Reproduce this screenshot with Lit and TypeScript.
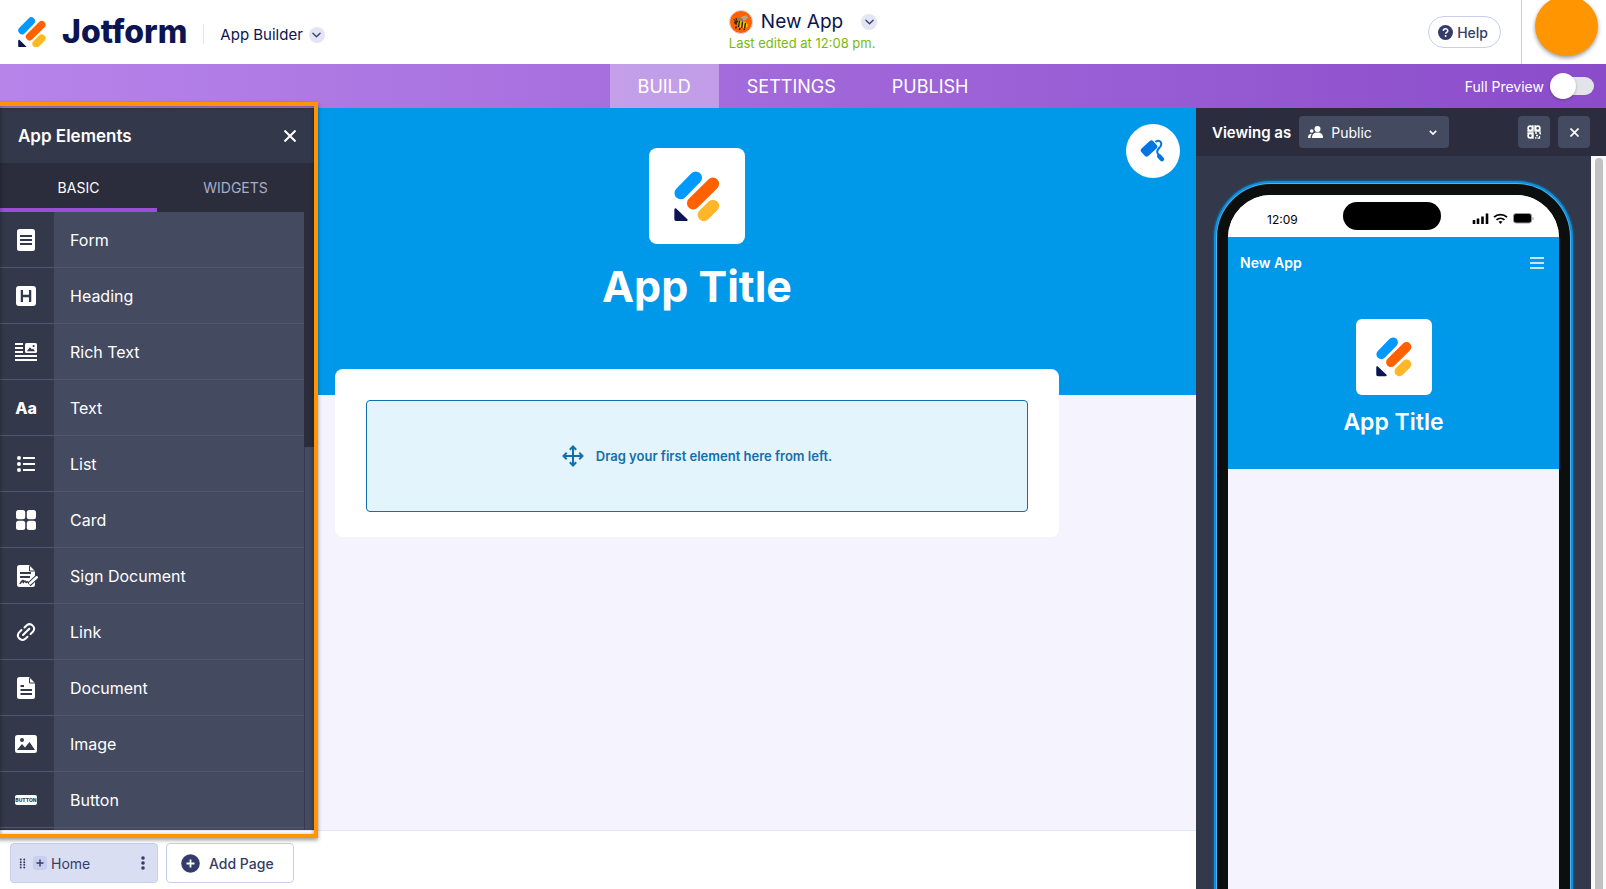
import { LitElement, html, svg, css, nothing, TemplateResult } from "lit";
import { customElement, property, state } from "lit/decorators.js";
import { classMap } from "lit/directives/class-map.js";

const chevron = svg`<path d="M1 1l4 4 4-4" fill="none" stroke="currentColor" stroke-width="1.4" stroke-linecap="round" stroke-linejoin="round"/>`;

/** Pencil mark of the brand, scaled by its host's width. */
@customElement("brand-mark")
export class BrandMark extends LitElement {
  static styles = css`
    :host { display: block; flex: none; }
    svg { display: block; width: 100%; height: auto; }
  `;

  render() {
    return html`
      <svg viewBox="284 212 137 150" aria-hidden="true" fill="none" stroke-linecap="round">
        <path d="M304 278L349 232" stroke="#0099ff" stroke-width="37" />
        <path d="M341 308L400 250" stroke="#ff6100" stroke-width="37" />
        <path d="M373 343L400 316" stroke="#ffb629" stroke-width="37" />
        <path d="M285 328c0-5 4-6 7-3l31 30c3 3 2 6-2 6h-29c-5 0-7-2-7-7z" fill="#0a1551" />
      </svg>
    `;
  }
}

interface PaletteItem {
  label: string;
  icon: TemplateResult;
}

const DARK = "#33384a";

const ITEMS: PaletteItem[] = [
  {
    label: "Form",
    icon: svg`<rect x="2" y="0" width="18" height="22" rx="2.5"/><path d="M5 7h12M5 11h12M5 15h12" stroke="${DARK}" stroke-width="2"/>`,
  },
  {
    label: "Heading",
    icon: svg`<rect x="1" y="1" width="20" height="20" rx="3"/><path d="M6.900 5v12M15.100 5v12M7 11h8" stroke="${DARK}" stroke-width="2.300"/>`,
  },
  {
    label: "Rich Text",
    icon: svg`<path d="M0 3h8M0 7h8M0 11h8M0 15h22M0 19h22" stroke="#fff" stroke-width="2"/><rect x="10" y="2" width="12" height="10" rx="1.500"/><path d="M11.800 10.200l3.200-4 2 2.400 1-1 2 2.600z" fill="${DARK}"/><circle cx="18.600" cy="5" r="1.100" fill="${DARK}"/>`,
  },
  {
    label: "Text",
    icon: svg`<text x="11" y="17" text-anchor="middle" font-size="16" font-weight="800" font-family="Inter, sans-serif">Aa</text>`,
  },
  {
    label: "List",
    icon: svg`<circle cx="4" cy="5" r="2"/><circle cx="4" cy="11" r="2"/><circle cx="4" cy="17" r="2"/><path d="M8 5h12M8 11h12M8 17h12" stroke="#fff" stroke-width="2"/>`,
  },
  {
    label: "Card",
    icon: svg`<rect x="1" y="1" width="9.200" height="9.200" rx="2.500"/><rect x="11.800" y="1" width="9.200" height="9.200" rx="2.500"/><rect x="1" y="11.800" width="9.200" height="9.200" rx="2.500"/><rect x="11.800" y="11.800" width="9.200" height="9.200" rx="2.500"/>`,
  },
  {
    label: "Sign Document",
    icon: svg`<path d="M4.500 0H14l6 6v13.500a2.500 2.500 0 0 1-2.500 2.500h-13A2.500 2.500 0 0 1 2 19.500v-17A2.500 2.500 0 0 1 4.500 0z"/><path d="M14.500 1v5H20" fill="none" stroke="${DARK}" stroke-width="1"/><path d="M5 8h11M5 12h10" stroke="${DARK}" stroke-width="1.800"/><path d="M5 19c2-4 4-5 3-1 2-3 3-2 3 0 1-2 2-1 3 0h4" fill="none" stroke="${DARK}" stroke-width="1.500"/><path d="M22.500 11.500L14 19.500" stroke="${DARK}" stroke-width="4.500"/><path d="M21.800 12.300L15.200 18.300" stroke="#fff" stroke-width="2.600" stroke-linecap="round"/>`,
  },
  {
    label: "Link",
    icon: svg`<g fill="none" stroke="#fff" stroke-width="2" stroke-linecap="round"><path d="M8 14l6.300-6.300"/><path d="M9.500 6.500l2.300-2.300a4.500 4.500 0 0 1 6.300 6.300l-2.600 2.600"/><path d="M12.500 15.700l-2.300 2.200a4.500 4.500 0 0 1-6.300-6.300l2.600-2.600"/></g>`,
  },
  {
    label: "Document",
    icon: svg`<path d="M4.500 0H14l6 6v13.500a2.500 2.500 0 0 1-2.500 2.500h-13A2.500 2.500 0 0 1 2 19.500v-17A2.500 2.500 0 0 1 4.500 0z"/><path d="M14.500 1v5H20" fill="none" stroke="${DARK}" stroke-width="1"/><path d="M5.500 9h3.500M5.500 13h11.500M5.500 17h11.500" stroke="${DARK}" stroke-width="1.800"/>`,
  },
  {
    label: "Image",
    icon: svg`<rect x="0" y="2" width="22" height="18" rx="2.500"/><circle cx="7" cy="7" r="2" fill="${DARK}"/><path d="M2 17l5-6 3 3.500 4.500-5.500 5.500 8z" fill="${DARK}"/>`,
  },
  {
    label: "Button",
    icon: svg`<rect x="0" y="6" width="22" height="10" rx="2"/><text x="11" y="13" text-anchor="middle" font-size="5" font-weight="800" font-family="Inter, sans-serif" fill="${DARK}">BUTTON</text>`,
  },
  { label: "", icon: svg`` },
];

/** Left palette with the elements that can be dragged on the canvas. */
@customElement("element-palette")
export class ElementPalette extends LitElement {
  @state() private tab = "BASIC";

  static styles = css`
    :host {
      display: grid;
      grid-template-rows: 55px 49px minmax(0, 1fr);
      position: relative;
      background: #2b2d3c;
      color: #fff;
      min-height: 0;
    }
    button { font: inherit; color: inherit; background: none; border: 0; padding: 0; cursor: pointer; }
    .head {
      display: flex;
      align-items: center;
      justify-content: space-between;
      padding: 0 18px;
      background: #33384a;
    }
    h2 { margin: 0; font-size: 17px; line-height: 24px; font-weight: 600; }
    .close { display: grid; place-items: center; }
    .close svg { display: block; }
    .tabs { display: grid; grid-template-columns: 1fr 1fr; }
    .tab {
      font-size: 14px;
      line-height: 20px;
      color: #a9aec6;
      border-bottom: 4px solid transparent;
      padding-top: 4px;
    }
    .on { color: #fff; border-bottom-color: #9a4fd6; }
    .body { display: grid; grid-template-columns: 1fr 10px; min-height: 0; }
    ul { list-style: none; margin: 0; padding: 0; overflow: hidden; }
    .item {
      display: grid;
      grid-template-columns: 54px 1fr;
      width: 100%;
      height: 56px;
      box-sizing: border-box;
      border-bottom: 1px solid #4f566d;
      background: #444a5f;
      font-size: 16px;
      text-align: left;
      cursor: grab;
    }
    .icon { display: grid; place-items: center; background: #33384a; padding-right: 2px; }
    .icon svg { display: block; overflow: visible; }
    .label { align-self: center; padding-left: 16px; }
    .track { display: flex; flex-direction: column; justify-content: flex-end; }
    .thumb { height: 62%; background: #444a5f; border-left: 1px solid #363b4e; }
    .frame {
      position: absolute;
      inset: -6px -4px -8px -4px;
      border: 4px solid #ff9500;
      box-shadow: 0 2px 4px rgba(0, 0, 0, 0.4), inset 0 1px 4px rgba(0, 0, 0, 0.4);
      pointer-events: none;
      z-index: 2;
    }
  `;

  render() {
    return html`
      <div class="head">
        <h2>App Elements</h2>
        <button class="close" aria-label="Close">
          <svg width="12" height="12" viewBox="0 0 12 12" stroke="#fff" stroke-width="2">
            <path d="M.5.500l11 11M11.500.500l-11 11" />
          </svg>
        </button>
      </div>
      <div class="tabs" role="tablist">
        ${["BASIC", "WIDGETS"].map(
          (t) => html`<button
            role="tab"
            aria-selected=${t === this.tab}
            class=${classMap({ tab: true, on: t === this.tab })}
            @click=${() => (this.tab = t)}
          >${t}</button>`
        )}
      </div>
      <div class="body">
        <ul>
          ${ITEMS.map(
            (i) => html`<li>
              <button class="item">
                <span class="icon"><svg width="22" height="22" viewBox="0 0 22 22" fill="#fff" aria-hidden="true">${i.icon}</svg></span>
                <span class="label">${i.label || nothing}</span>
              </button>
            </li>`
          )}
        </ul>
        <div class="track"><div class="thumb"></div></div>
      </div>
      <div class="frame"></div>
    `;
  }
}

/** Right column with the live phone preview. */
@customElement("phone-preview")
export class PhonePreview extends LitElement {
  @property() name = "New App";
  @property() heading = "App Title";

  static styles = css`
    :host {
      display: grid;
      grid-template-rows: 48px minmax(0, 1fr);
      background: #33384a;
      color: #fff;
      min-height: 0;
    }
    .bar {
      display: flex;
      align-items: center;
      gap: 8px;
      padding: 0 16px;
      background: #2b2d3f;
      font-size: 15px;
      font-weight: 600;
    }
    .picker {
      display: grid;
      grid-template-columns: 32px 1fr 20px;
      align-items: center;
      width: 150px;
      height: 32px;
      border-radius: 4px;
      background: #444a5f;
      margin-right: auto;
    }
    .picker > svg { grid-row: 1; pointer-events: none; z-index: 1; }
    .people { grid-column: 1; margin-left: 9px; }
    .arrow { grid-column: 3; }
    select {
      grid-column: 1 / 4;
      grid-row: 1;
      height: 32px;
      appearance: none;
      border: 0;
      background: none;
      color: #fff;
      font: inherit;
      font-size: 14px;
      font-weight: 400;
      padding: 0 24px 0 32px;
    }
    .square {
      display: grid;
      place-items: center;
      width: 32px;
      height: 32px;
      padding: 0;
      border: 0;
      border-radius: 4px;
      background: #444a5f;
      color: #fff;
    }
    .square + .square { margin-right: 0; }
    .scroll { display: grid; grid-template-columns: 1fr 15px; min-height: 0; overflow: hidden; }
    .stage { display: flex; justify-content: center; align-items: flex-start; padding-top: 28px; }
    .track { background: #fafafa; padding: 2px 3px 41px 4px; display: flex; }
    .thumb { flex: 1; border-radius: 4px; background: #c1c1c1; }
    .phone {
      box-sizing: border-box;
      width: 353px;
      aspect-ratio: 353 / 765;
      border: 11px solid #0d0f0f;
      border-radius: 54px;
      background: #f5f3fe;
      box-shadow: 0 0 0 1px #4bb4f2, 0 0 0 3px #0f8fd9, 0 0 2px 4px rgba(12, 110, 170, 0.7);
      overflow: hidden;
    }
    .status {
      display: grid;
      grid-template-columns: 1fr auto 118px;
      align-items: center;
      height: 42px;
      background: #fff;
      color: #000;
      font-size: 12px;
    }
    .time { padding: 8px 0 0 39px; line-height: 16px; }
    .island { width: 98px; height: 28px; border-radius: 14px; background: #000; }
    .signals { justify-self: end; margin-right: 25px; padding-top: 4px; }
    .hero { height: 232px; box-sizing: border-box; background: #0099e9; display: flex; flex-direction: column; align-items: center; }
    .top {
      align-self: stretch;
      display: flex;
      justify-content: space-between;
      align-items: center;
      padding: 16px 15px 16px 12px;
      font-size: 14px;
      line-height: 20px;
      font-weight: 600;
    }
    .menu { padding: 0; border: 0; background: none; display: block; }
    .menu svg, .picker svg { display: block; }
    .tile {
      display: grid;
      place-items: center;
      width: 76px;
      height: 76px;
      margin-top: 30px;
      border-radius: 6px;
      background: #fff;
    }
    .tile brand-mark { width: 36px; }
    h3 { margin: 10px 0 0; font-size: 23px; line-height: 34px; font-weight: 600; }
  `;

  render() {
    return html`
      <div class="bar">
        <label for="viewer">Viewing as</label>
        <div class="picker">
          <svg class="people" width="15" height="12" viewBox="0 0 15 12" fill="#fff" aria-hidden="true">
            <circle cx="9.500" cy="3" r="3" /><path d="M4 12c0-4 2-5.500 5.500-5.500S15 8 15 12z" />
            <circle cx="3.700" cy="5" r="1.800" /><path d="M0 12c0-3 1-4.300 4-4.300-1 1-1.500 2.500-1.500 4.300z" />
          </svg>
          <select id="viewer"><option>Public</option></select>
          <svg class="arrow" width="8" height="5" viewBox="0 0 10 6" aria-hidden="true">
            <path d="M1 1l4 4 4-4" fill="none" stroke="#fff" stroke-width="2" />
          </svg>
        </div>
        <button class="square" aria-label="QR code">
          <svg width="14" height="14" viewBox="0 0 14 14" fill="none" stroke="#fff" stroke-width="1.700">
            <circle cx="3.300" cy="3.300" r="2.200" /><circle cx="10.700" cy="3.300" r="2.200" /><circle cx="3.300" cy="10.700" r="2.200" />
            <path d="M5 .9h1v5.100H1V5M9 .9H8v5.100h5V5M1 9V8h5v5H5M8 8h2M12 8h1.500v1.500M9 10.500h2M12.500 11v2.200h-2M8.800 12v1.800" stroke-width="1.300" />
          </svg>
        </button>
        <button class="square" aria-label="Close preview">
          <svg width="9" height="9" viewBox="0 0 10 10" stroke="#fff" stroke-width="1.800"><path d="M.5.500l9 9M9.500.500l-9 9" /></svg>
        </button>
      </div>
      <div class="scroll">
        <div class="stage">
          <div class="phone">
            <div class="status">
              <span class="time">12:09</span>
              <span class="island"></span>
              <svg class="signals" width="62" height="11" viewBox="0 0 62 11" aria-hidden="true">
                <path d="M2 7v4M6 5.500V11M10.500 3.500V11M15 .5V11" stroke="#000" stroke-width="2.600" />
                <g fill="none" stroke="#000" stroke-width="1.800"><path d="M22 4.200a9.500 9.500 0 0 1 13 0M24.500 6.900a6 6 0 0 1 8 0" /></g>
                <path d="M28.500 11l-2-2.200a3 3 0 0 1 4 0z" />
                <rect x="41.500" y=".5" width="18" height="9.500" rx="2.500" fill="#000" stroke="#999" />
                <path d="M61 4v3" stroke="#999" />
              </svg>
            </div>
            <div class="hero">
              <div class="top">
                <span>${this.name}</span>
                <button class="menu" aria-label="Menu">
                  <svg width="14" height="12" viewBox="0 0 14 12" stroke="#fff" stroke-width="1.600"><path d="M0 1h14M0 6h14M0 11h14" /></svg>
                </button>
              </div>
              <div class="tile"><brand-mark></brand-mark></div>
              <h3>${this.heading}</h3>
            </div>
          </div>
        </div>
        <div class="track"><div class="thumb"></div></div>
      </div>
    `;
  }
}

@customElement("app-root")
export class AppRoot extends LitElement {
  @state() private section = "BUILD";

  static styles = css`
    :host {
      display: grid;
      grid-template-rows: 64px 44px minmax(0, 1fr);
      height: 100vh;
      overflow: hidden;
      font-family: Inter, "Liberation Sans", sans-serif;
      color: #0a1551;
      background: #fff;
    }
    button { font: inherit; color: inherit; background: none; border: 0; padding: 0; cursor: pointer; }
    svg { display: block; }

    .header { display: grid; grid-template-columns: 1fr auto 1fr; }
    .brand { display: flex; align-items: center; padding-left: 18px; }
    .home { display: flex; align-items: center; gap: 16px; color: inherit; text-decoration: none; }
    .home brand-mark { width: 28px; }
    .word { font-size: 32px; line-height: 40px; font-weight: 800; }
    .rule { width: 1px; height: 20px; background: #e3e5f5; margin: 4px 16px 0; }
    .product {
      display: flex;
      align-items: center;
      gap: 6px;
      padding-top: 6px;
      font-size: 15px;
      line-height: 20px;
    }
    .round { display: grid; place-items: center; width: 16px; height: 16px; border-radius: 50%; background: #e3e5f5; color: #343c6a; }

    .title { display: flex; flex-direction: column; padding-top: 9px; }
    .name { display: flex; align-items: center; gap: 8px; }
    h1 { margin: 0; font-size: 19px; line-height: 26px; font-weight: 400; }
    .name .round { margin-left: 10px; }
    .saved { font-size: 13px; line-height: 16px; color: #78bb07; }

    .account { display: flex; justify-content: flex-end; align-items: center; gap: 20px; }
    .help {
      display: flex;
      align-items: center;
      gap: 4px;
      height: 32px;
      box-sizing: border-box;
      padding: 0 12px 0 9px;
      border: 1px solid #c8ceed;
      border-radius: 16px;
      font-size: 14px;
      font-weight: 500;
      color: #343c6a;
    }
    .user { align-self: stretch; border-left: 1px solid #c8c8ec; padding: 0 8px 0 13px; }
    .avatar {
      display: block;
      width: 63px;
      height: 60px;
      margin-top: -4px;
      border-radius: 50%;
      background: #ff9500;
      box-shadow: 0 2px 4px rgba(0, 0, 0, 0.4);
    }

    .nav {
      display: grid;
      grid-template-columns: 1fr auto 1fr;
      background: linear-gradient(to right, #b784ea, #8b4cca);
      color: #fff;
    }
    .sections { grid-column: 2; display: flex; }
    .section { padding: 0 28px; font-size: 18px; }
    .active { background: rgba(255, 255, 255, 0.34); }
    .full { display: flex; align-items: center; justify-content: flex-end; gap: 12px; padding-right: 12px; font-size: 14px; }
    .full input {
      appearance: none;
      margin: 0;
      width: 38px;
      height: 18px;
      display: flex;
      align-items: center;
      background: #e3e3ea;
      border-radius: 9px;
    }
    .full input::before {
      content: "";
      width: 26px;
      height: 26px;
      margin: 0 -6px;
      border-radius: 50%;
      background: #fff;
      box-shadow: 0 1px 3px rgba(0, 0, 0, 0.25);
    }
    .full input:checked { justify-content: flex-end; }

    .work { display: grid; grid-template-columns: minmax(0, 1fr) 410px; min-height: 0; }
    .editor { display: grid; grid-template-columns: 314px minmax(0, 1fr); grid-template-rows: minmax(0, 1fr) 59px; min-height: 0; }
    .canvas { background: #f5f3fe; position: relative; min-height: 0; }
    .hero {
      display: flex;
      flex-direction: column;
      align-items: center;
      height: 287px;
      box-sizing: border-box;
      padding: 40px 137px 0 21px;
      background: #0099e9;
      color: #fff;
    }
    .tile { display: grid; place-items: center; width: 96px; height: 96px; border-radius: 8px; background: #fff; }
    .tile brand-mark { width: 46px; }
    h2 { margin: 12px 0 0; font-size: 43px; line-height: 60px; font-weight: 700; }
    .paint {
      position: absolute;
      top: 16px;
      right: 16px;
      width: 54px;
      height: 54px;
      border-radius: 50%;
      background: #fff;
      display: grid;
      place-items: center;
    }
    .sheet {
      position: relative;
      margin: -26px 137px 0 21px;
      padding: 31px 31px 25px;
      border-radius: 8px;
      background: #fff;
    }
    .drop {
      display: flex;
      align-items: center;
      justify-content: center;
      gap: 12px;
      height: 112px;
      box-sizing: border-box;
      border: 1px solid #136fa9;
      border-radius: 4px;
      background: #e3f4fd;
      color: #136fa9;
      font-size: 13px;
      font-weight: 600;
    }
    .pages {
      grid-column: 1 / 3;
      display: flex;
      align-items: center;
      gap: 8px;
      border-top: 1px solid #e3e5f5;
      padding: 6px 10px 0;
      background: #fff;
      color: #343c6a;
      font-size: 14px;
    }
    .page {
      display: flex;
      align-items: center;
      box-sizing: border-box;
      height: 40px;
      border: 1px solid #c8ceed;
      border-radius: 4px;
    }
    .current { width: 148px; padding: 0 12px 0 8px; gap: 4px; background: #dadef3; }
    .current button:last-child { margin-left: auto; }
    .plus { display: grid; place-items: center; width: 14px; height: 14px; border-radius: 3px; background: #c8ceed; margin-left: 3px; }
    .add { width: 128px; padding: 0 14px; gap: 9px; font-weight: 500; }
  `;

  private chevron() {
    return html`<svg width="9" height="6" viewBox="0 0 10 6" aria-hidden="true">${chevron}</svg>`;
  }

  render() {
    return html`
      <header class="header">
        <div class="brand">
          <a class="home" href="#"><brand-mark></brand-mark><span class="word">Jotform</span></a>
          <span class="rule"></span>
          <button class="product">App Builder <span class="round">${this.chevron()}</span></button>
        </div>
        <div class="title">
          <div class="name">
            <svg width="24" height="24" viewBox="0 0 24 24" aria-hidden="true">
              <circle cx="12" cy="12" r="11.500" fill="#ff6100" stroke="#d9d9ec" />
              <ellipse cx="14.500" cy="8.500" rx="4.500" ry="2.200" fill="#b9a58c" transform="rotate(-25 14.500 8.500)" />
              <ellipse cx="11" cy="9.500" rx="3.500" ry="1.600" fill="#8d7a62" transform="rotate(20 11 9.500)" />
              <circle cx="7.500" cy="12.500" r="2.300" fill="#3a2a12" />
              <ellipse cx="13.500" cy="14.500" rx="5.500" ry="3.500" fill="#f2c500" transform="rotate(18 13.500 14.500)" />
              <path d="M10.500 11l-1 6M13.500 11.500l-.8 6.500M16.500 13l-.8 5M7.500 16.500l-1 2M11 18l-.5 2M15 18.500l.5 1.500" stroke="#221a0c" stroke-width="1.400" />
              <path d="M6 10.500L4.800 9M7.500 10L7 8" stroke="#221a0c" />
            </svg>
            <h1>New App</h1>
            <button class="round" aria-label="Rename app">${this.chevron()}</button>
          </div>
          <div class="saved">Last edited at 12:08 pm.</div>
        </div>
        <div class="account">
          <button class="help">
            <svg width="15" height="15" viewBox="0 0 15 15" aria-hidden="true">
              <circle cx="7.500" cy="7.500" r="7.500" fill="#343c6a" />
              <path d="M5.300 6c0-3 4.500-2.900 4.500-.2 0 1.600-2.200 1.500-2.200 3" fill="none" stroke="#fff" stroke-width="1.500" />
              <circle cx="7.600" cy="11" r="1" fill="#fff" />
            </svg>
            Help
          </button>
          <div class="user"><button class="avatar" aria-label="Account"></button></div>
        </div>
      </header>

      <nav class="nav">
        <div class="sections">
          ${["BUILD", "SETTINGS", "PUBLISH"].map(
            (s) => html`<button
              class=${classMap({ section: true, active: s === this.section })}
              @click=${() => (this.section = s)}
            >${s}</button>`
          )}
        </div>
        <label class="full">Full Preview <input type="checkbox" role="switch" /></label>
      </nav>

      <main class="work">
        <div class="editor">
          <element-palette></element-palette>
          <section class="canvas">
            <div class="hero">
              <div class="tile"><brand-mark></brand-mark></div>
              <h2>App Title</h2>
            </div>
            <button class="paint" aria-label="App designer">
              <svg width="26" height="24" viewBox="0 0 26 24" aria-hidden="true">
                <rect x="1" y="4.500" width="16" height="10" rx="2.500" fill="#0075e3" transform="rotate(-42 9 9.500)" />
                <path d="M15.500 3c1.500-1.800 4-1.500 5.300.200 1.600 2.300-.3 4.300-1.700 5.800-1.800 2-2.600 3.200-1.600 5l1.500 2.500" fill="none" stroke="#0075e3" stroke-width="2" />
                <path d="M19.200 17.200l2.800 3" stroke="#0075e3" stroke-width="4.400" stroke-linecap="round" />
              </svg>
            </button>
            <div class="sheet">
              <div class="drop">
                <svg width="22" height="22" viewBox="0 0 22 22" fill="none" stroke="#136fa9" stroke-width="2" aria-hidden="true">
                  <path d="M11 2v18M2 11h18M7.800 4.700L11 1.500l3.200 3.200M7.800 17.300l3.200 3.200 3.200-3.200M4.700 7.800L1.500 11l3.200 3.200M17.300 7.800l3.200 3.200-3.200 3.200" />
                </svg>
                Drag your first element here from left.
              </div>
            </div>
          </section>
          <footer class="pages">
            <div class="page current">
              <svg width="7" height="11" viewBox="0 0 8 12" fill="#343c6a" aria-hidden="true">
                ${[1.5, 4.5, 7.5, 10.5].map((y) => svg`<circle cx="2" cy=${y} r="1.100"/><circle cx="6" cy=${y} r="1.100"/>`)}
              </svg>
              <button class="plus" aria-label="Add page icon">
                <svg width="8" height="8" viewBox="0 0 8 8" stroke="#343c6a" stroke-width="1.400"><path d="M4 .5v7M.5 4h7" /></svg>
              </button>
              <span>Home</span>
              <button aria-label="Page options">
                <svg width="4" height="14" viewBox="0 0 4 14" fill="#343c6a">
                  <circle cx="2" cy="2" r="1.800" /><circle cx="2" cy="7" r="1.800" /><circle cx="2" cy="12" r="1.800" />
                </svg>
              </button>
            </div>
            <button class="page add">
              <svg width="19" height="19" viewBox="0 0 19 19" aria-hidden="true">
                <circle cx="9.500" cy="9.500" r="9.300" fill="#343c6a" /><path d="M9.500 5.500v8M5.500 9.500h8" stroke="#fff" stroke-width="1.800" />
              </svg>
              Add Page
            </button>
          </footer>
        </div>
        <phone-preview></phone-preview>
      </main>
    `;
  }
}
